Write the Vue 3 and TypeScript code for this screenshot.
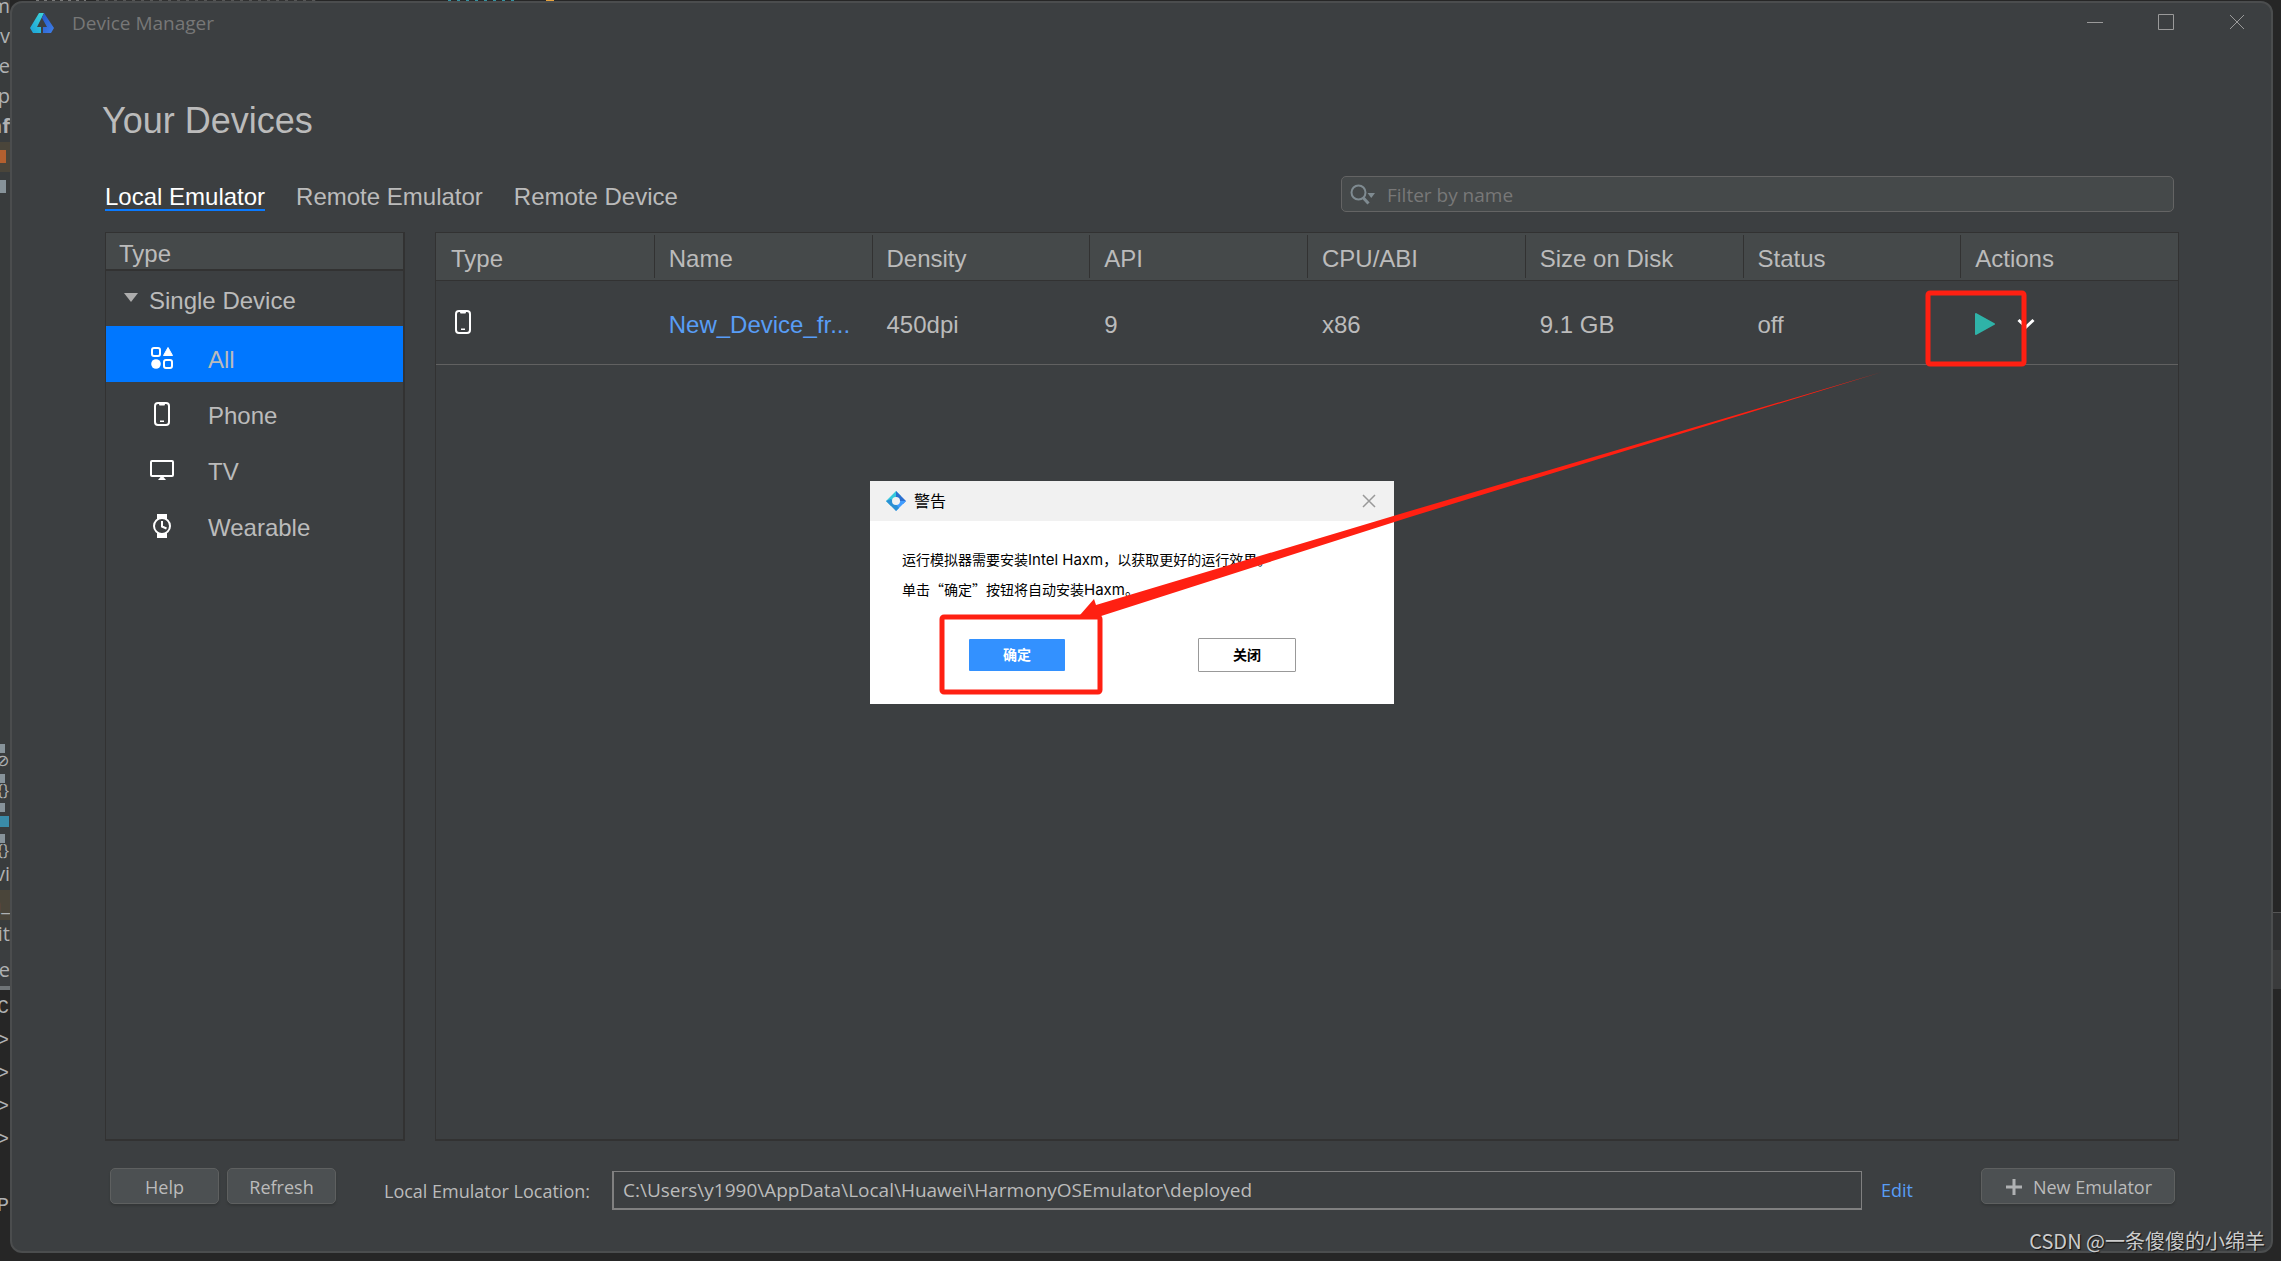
<script setup lang="ts">
import { ref } from 'vue'

type IconName = 'all' | 'phone' | 'tv' | 'watch'

const tabs = ['Local Emulator', 'Remote Emulator', 'Remote Device']
const activeTab = ref('Local Emulator')

const types: { icon: IconName; label: string }[] = [
  { icon: 'all', label: 'All' },
  { icon: 'phone', label: 'Phone' },
  { icon: 'tv', label: 'TV' },
  { icon: 'watch', label: 'Wearable' },
]
const activeType = ref('All')

const columns = ['Type', 'Name', 'Density', 'API', 'CPU/ABI', 'Size on Disk', 'Status', 'Actions']
const device = { name: 'New_Device_fr...', density: '450dpi', api: '9', cpu: 'x86', size: '9.1 GB', status: 'off' }

const filter = ref('')
const location = ref('C:\\Users\\y1990\\AppData\\Local\\Huawei\\HarmonyOSEmulator\\deployed')

const treeTop = [
  { text: 'gm', kind: '' },
  { text: 'av', kind: '' },
  { text: 'de', kind: '' },
  { text: 'p', kind: '' },
  { text: 'nf', kind: 'bold' },
  { text: '', kind: 'orange' },
  { text: '', kind: 'grey' },
]
const treeBottom = [
  { text: '⊘', kind: 'file' },
  { text: '{}', kind: 'file' },
  { text: '', kind: 'cyan' },
  { text: '{}', kind: 'file' },
  { text: 'vi', kind: '' },
  { text: 'h_', kind: 'marked' },
  { text: 'git', kind: '' },
]
const consoleLines = ['C', '>', '>', '>', '>', '', 'P']
</script>

<template>
  <div class="desktop">
    <div class="editor-top" aria-hidden="true"><i class="t1"></i><i class="t2"></i><i class="t3"></i><i class="t4"></i></div>
    <div class="ide-left" aria-hidden="true">
      <div class="tree">
        <div v-for="(r, i) in treeTop" :key="i" class="tree-row" :class="r.kind">{{ r.text }}</div>
      </div>
      <div class="tree tree-lower">
        <div v-for="(r, i) in treeBottom" :key="i" class="tree-row" :class="r.kind">{{ r.text }}</div>
      </div>
      <div class="tool-tab">ne</div>
      <div class="console">
        <div v-for="(l, i) in consoleLines" :key="i" class="console-row">{{ l }}</div>
      </div>
    </div>

    <div class="window">
      <header class="titlebar">
        <svg class="logo" viewBox="0 0 24 22" width="24" height="22">
          <defs>
            <linearGradient id="lg-a" x1="0" y1="1" x2="1" y2="0">
              <stop offset="0" stop-color="#1aa0d8" />
              <stop offset="1" stop-color="#3fd6d8" />
            </linearGradient>
            <linearGradient id="lg-b" x1="0" y1="0" x2="1" y2="1">
              <stop offset="0" stop-color="#2458c8" />
              <stop offset="1" stop-color="#3f7fe8" />
            </linearGradient>
          </defs>
          <path d="M9 1h5L7 15h4v6H3L0 16z" fill="url(#lg-a)" />
          <path d="M14 1l10 15-3 5h-8v-6h4L12 6z" fill="url(#lg-b)" />
        </svg>
        <span class="title">Device Manager</span>
        <div class="window-buttons">
          <button type="button" aria-label="Minimize">
            <svg width="16" height="16" viewBox="0 0 16 16"><path d="M0 8.500h16" /></svg>
          </button>
          <button type="button" aria-label="Maximize">
            <svg width="16" height="16" viewBox="0 0 16 16"><path d="M.5 .5h15v15H.5z" /></svg>
          </button>
          <button type="button" aria-label="Close">
            <svg width="16" height="16" viewBox="0 0 16 16"><path d="M1 1l14 14M15 1L1 15" /></svg>
          </button>
        </div>
      </header>

      <main class="content">
        <h1>Your Devices</h1>

        <div class="toolbar">
          <nav class="tabs" role="tablist">
            <button
              v-for="t in tabs"
              :key="t"
              type="button"
              role="tab"
              :aria-selected="t === activeTab"
              :class="{ active: t === activeTab }"
              @click="activeTab = t"
            >{{ t }}</button>
          </nav>
          <label class="search">
            <svg width="26" height="22" viewBox="0 0 26 22">
              <circle cx="8.5" cy="8.5" r="7" fill="none" stroke="#7f8b91" stroke-width="2" />
              <path d="M13 13.500l5.500 6" stroke="#7f8b91" stroke-width="3" />
              <path d="M17.500 9h7.500l-3.750 5z" fill="#7f8b91" />
            </svg>
            <input v-model="filter" type="text" placeholder="Filter by name" aria-label="Filter by name" />
          </label>
        </div>

        <div class="panels">
          <aside class="sidebar">
            <div class="side-head">Type</div>
            <div class="group">
              <svg width="14" height="10" viewBox="0 0 14 10"><path d="M0 0h14L7 9z" fill="#adadad" /></svg>
              Single Device
            </div>
            <button
              v-for="t in types"
              :key="t.label"
              type="button"
              class="type"
              :class="{ active: t.label === activeType }"
              @click="activeType = t.label"
            >
              <svg v-if="t.icon === 'all'" width="24" height="24" viewBox="0 0 24 24">
                <rect x="2" y="2" width="8" height="8" rx="2" fill="none" stroke="#fff" stroke-width="2" />
                <rect x="14" y="14" width="8" height="8" rx="2" fill="none" stroke="#fff" stroke-width="2" />
                <path d="M18 1.500L22.500 9.500h-9z" fill="#fff" stroke="#fff" stroke-linejoin="round" />
                <circle cx="6" cy="18" r="4.800" fill="#fff" />
              </svg>
              <svg v-else-if="t.icon === 'phone'" width="24" height="24" viewBox="0 0 24 24">
                <rect x="5" y="1" width="14" height="22" rx="3" fill="none" stroke="#fff" stroke-width="2" />
                <path d="M8.500 1h7l-1 2.500h-5zM10 18.500h4v1.500h-4z" fill="#fff" />
              </svg>
              <svg v-else-if="t.icon === 'tv'" width="24" height="24" viewBox="0 0 24 24">
                <rect x="1" y="3" width="22" height="15" rx="1" fill="none" stroke="#fff" stroke-width="2" />
                <path d="M10.500 19h3l2.500 3H8z" fill="#fff" />
              </svg>
              <svg v-else width="24" height="24" viewBox="0 0 24 24">
                <path d="M7 0h10v5H7zM7 19h10v5H7z" fill="#fff" />
                <circle cx="12" cy="12" r="8" fill="#3c3f41" stroke="#fff" stroke-width="2" />
                <path d="M12 7v5.500l4.500 2" fill="none" stroke="#fff" stroke-width="2" />
              </svg>
              <span>{{ t.label }}</span>
            </button>
          </aside>

          <section class="devices">
            <table>
              <thead>
                <tr><th v-for="c in columns" :key="c" scope="col">{{ c }}</th></tr>
              </thead>
              <tbody>
                <tr>
                  <td>
                    <svg class="row-phone" width="24" height="24" viewBox="0 0 24 24">
                      <rect x="5" y="1" width="14" height="22" rx="3" fill="none" stroke="#fff" stroke-width="2" />
                      <path d="M8.500 1h7l-1 2.500h-5zM10 18.500h4v1.500h-4z" fill="#fff" />
                    </svg>
                  </td>
                  <td><a href="#">{{ device.name }}</a></td>
                  <td>{{ device.density }}</td>
                  <td>{{ device.api }}</td>
                  <td>{{ device.cpu }}</td>
                  <td>{{ device.size }}</td>
                  <td>{{ device.status }}</td>
                  <td>
                    <div class="actions">
                      <button type="button" aria-label="Run">
                        <svg width="20" height="22" viewBox="0 0 20 22"><path d="M1 1l18 10L1 21z" fill="#2fb3a8" stroke="#2fb3a8" stroke-width="2" stroke-linejoin="round" /></svg>
                      </button>
                      <button type="button" aria-label="More">
                        <svg width="18" height="12" viewBox="0 0 18 12"><path d="M1.500 2L9 9l7.500-7" fill="none" stroke="#fff" stroke-width="3" /></svg>
                      </button>
                    </div>
                  </td>
                </tr>
              </tbody>
            </table>
          </section>
        </div>

        <footer class="footer">
          <button type="button" class="btn">Help</button>
          <button type="button" class="btn">Refresh</button>
          <label for="location">Local Emulator Location:</label>
          <input id="location" v-model="location" type="text" readonly />
          <a href="#" class="edit">Edit</a>
          <button type="button" class="btn new">
            <svg width="16" height="16" viewBox="0 0 16 16"><path d="M8 0v16M0 8h16" stroke="#afb1b3" stroke-width="3" /></svg>
            New Emulator
          </button>
        </footer>
      </main>
    </div>

    <div class="ide-right" aria-hidden="true"></div>

    <div class="dialog" role="dialog" aria-labelledby="dialog-title" lang="zh-CN">
      <div class="dialog-head">
        <svg width="20" height="20" viewBox="0 0 20 20">
          <path d="M10 0L0 10l5 5 5-9 5-1z" fill="#35c8dc" />
          <path d="M10 0l10 10-3 3-7-7z" fill="#2a6fd0" />
          <path d="M20 10L10 20l-2-6 7-4z" fill="#3f9cff" />
          <path d="M0 10l10 10 3-3-8-9z" fill="#2a8fd4" />
          <circle cx="10" cy="10" r="4" fill="#f1f1f1" />
        </svg>
        <span id="dialog-title">警告</span>
        <button type="button" aria-label="关闭对话框">
          <svg width="14" height="14" viewBox="0 0 14 14"><path d="M1 1l12 12M13 1L1 13" stroke="#999" stroke-width="1.500" /></svg>
        </button>
      </div>
      <div class="dialog-body">
        <p>运行模拟器需要安装<span class="latin">Intel Haxm</span>，以获取更好的运行效果。</p>
        <p>单击“确定”按钮将自动安装<span class="latin">Haxm</span>。</p>
      </div>
      <div class="dialog-actions">
        <button type="button" class="ok">确定</button>
        <button type="button" class="cancel">关闭</button>
      </div>
    </div>

    <svg class="annotations" width="2281" height="1261" viewBox="0 0 2281 1261" aria-hidden="true">
      <g fill="none" stroke="#ff2012" stroke-width="5">
        <rect x="1928" y="293" width="96" height="71" rx="2" />
        <rect x="942" y="617" width="158" height="75" rx="2" />
      </g>
      <path d="M1882 372L1410 511L1096 605L1094 599L1080 615L1098 617L1410 517Z" fill="#ff2012" />
    </svg>

    <div class="watermark" lang="zh-CN">CSDN @一条傻傻的小绵羊</div>
  </div>
</template>

<style>
body {
  background: #262626;
}
</style>

<style scoped>
.desktop {
  --ui: "Open Sans", "Noto Sans", sans-serif;
  position: relative;
  display: grid;
  grid-template-columns: 10px minmax(0, 1fr) 8px;
  min-height: 100vh;
  overflow: hidden;
  color: #bbb;
  font: 24px/28px "Liberation Sans", Arial, sans-serif;
}
button {
  margin: 0;
  padding: 0;
  border: 0;
  background: none;
  color: inherit;
  font: inherit;
}
svg {
  display: block;
  flex: none;
}
a {
  color: #589df6;
  text-decoration: none;
}

/* Slivers of the application behind the window */
.editor-top {
  position: absolute;
  top: 0;
  left: 0;
  display: flex;
  gap: 10px;
  padding-left: 36px;
}
.editor-top i { height: 2px; }
.t1 { width: 50px; background: repeating-linear-gradient(90deg, #777 0 3px, #303030 3px 8px); }
.t2 { width: 220px; background: repeating-linear-gradient(90deg, #555 0 3px, #303030 3px 9px); }
.t3 { width: 68px; margin-left: 122px; background: repeating-linear-gradient(90deg, #3592a0 0 3px, #262626 3px 9px); }
.t4 { width: 8px; margin-left: 20px; background: #e8a33d; }
.ide-left {
  width: 10px;
  height: 0;
  min-height: 100%;
  overflow: hidden;
  background: #262626;
  font: 20px/28px "Open Sans", "Noto Sans", sans-serif;
  color: #afb1b3;
}
.tree {
  height: 753px;
  margin-top: -8px;
  background: #393c3d;
}
.tree-lower {
  height: 210px;
  margin-top: -5px;
}
.tree-row {
  display: flex;
  justify-content: flex-end;
  height: 30px;
}
.bold { font-weight: 700; }
.orange::before, .grey::before {
  content: "";
  width: 6px;
  height: 13px;
  margin: 8px 4px 0 0;
  background: #b4602f;
}
.orange { background: #4a453a; }
.grey::before { background: #87939a; }
.file {
  padding-right: 1px;
  background: linear-gradient(#87939a, #87939a) 0 4px / 5px 9px no-repeat;
  font-size: 16px;
  line-height: 40px;
}
.cyan { background: linear-gradient(#87939a, #87939a) 0 3px / 5px 9px no-repeat, linear-gradient(#3a8ba8, #3a8ba8) 0 16px / 9px 11px no-repeat; }
.marked { background: #4a453a; }
.tool-tab {
  display: flex;
  justify-content: flex-end;
  height: 36px;
  border-bottom: 4px solid #6f7477;
  background: #3b3e40;
  line-height: 40px;
}
.console-row {
  display: flex;
  justify-content: flex-end;
  height: 33px;
  padding-right: 1px;
  font: 20px/36px "Liberation Mono", monospace;
}
.ide-right {
  height: 120px;
  margin-top: 912px;
  background: linear-gradient(#555 1px, #2f3031 1px 38px, #3a3b3c 38px 77px, #262626 77px);
}

.window {
  position: relative;
  display: flex;
  flex-direction: column;
  margin: 1px 0 8px;
  border: 2px solid #4b4d4e;
  border-radius: 12px;
  background: #3c3f41;
}
.titlebar {
  display: flex;
  align-items: center;
  height: 40px;
  padding: 0 26px 0 18px;
  color: #777;
  font: 19px/24px var(--ui);
}
.title { margin-left: 18px; }
.window-buttons {
  display: flex;
  gap: 55px;
  margin-left: auto;
  padding-bottom: 2px;
}
.window-buttons path {
  fill: none;
  stroke: #9a9a9a;
}

.content {
  display: flex;
  flex: 1;
  flex-direction: column;
  padding: 58px 92px 41px 93px;
}
h1 {
  margin: 0 0 35px -3px;
  font-size: 36px;
  font-weight: 400;
  line-height: 40px;
}
.toolbar {
  display: flex;
  align-items: flex-end;
  justify-content: space-between;
  padding-right: 5px;
}
.tabs {
  display: flex;
  gap: 31px;
  padding-bottom: 1px;
}
.tabs button {
  border-bottom: 2px solid transparent;
  line-height: 24px;
}
.tabs .active {
  border-color: #0a7aff;
  color: #fff;
}
.search {
  display: flex;
  align-items: center;
  gap: 11px;
  box-sizing: border-box;
  width: 833px;
  height: 36px;
  padding: 2px 8px 0;
  border: 1px solid #646464;
  border-radius: 5px;
  background: #45494a;
}
.search input {
  flex: 1;
  padding: 0;
  border: 0;
  outline: 0;
  background: none;
  color: #bbb;
  font: 19px/24px var(--ui);
}
.search input::placeholder { color: #787878; opacity: 1; }

.panels {
  display: flex;
  flex: 1;
  gap: 30px;
  margin-top: 20px;
}
.sidebar {
  box-sizing: border-box;
  flex: 0 0 300px;
  border: 1px solid #323232;
  border-width: 1px 2px 2px 1px;
}
.side-head {
  height: 36px;
  padding-left: 13px;
  border-bottom: 2px solid #323232;
  background: #45494a;
  line-height: 42px;
}
.group {
  display: flex;
  gap: 11px;
  height: 55px;
  padding-left: 18px;
  line-height: 60px;
}
.group svg { margin-top: 22px; }
.type {
  display: flex;
  align-items: center;
  gap: 34px;
  box-sizing: border-box;
  width: 100%;
  height: 56px;
  padding: 8px 0 0 44px;
}
.type span { padding-top: 4px; }
.type.active { background: #0077ff; }

.devices {
  flex: 1;
  min-width: 0;
  border: 1px solid #323232;
  border-bottom-width: 2px;
}
table {
  width: 100%;
  border-collapse: collapse;
  table-layout: fixed;
}
th, td {
  padding: 0 0 0 15px;
  font-weight: 400;
  text-align: left;
  white-space: nowrap;
}
th {
  height: 43px;
  padding-top: 4px;
  border-bottom: 1px solid #323232;
  background: linear-gradient(#323232, #323232) 0 2px / 1px 43px no-repeat, #45494a;
}
th:first-child { background: #45494a; }
td {
  height: 79px;
  padding-top: 4px;
  border-bottom: 1px solid #616161;
}
.row-phone { margin-bottom: 6px; }
.actions {
  display: flex;
  align-items: center;
  gap: 22px;
  padding-bottom: 2px;
}

.footer {
  display: flex;
  align-items: flex-start;
  margin-top: 27px;
  padding: 0 4px 0 5px;
  font: 18px/24px var(--ui);
}
.btn {
  box-sizing: border-box;
  width: 109px;
  height: 36px;
  margin-right: 8px;
  padding-top: 2px;
  border: 1px solid #5e6060;
  border-radius: 5px;
  background: #4c5052;
  box-shadow: 0 2px 2px #343738;
}
.footer label { margin: 11px 22px 0 40px; }
.footer input {
  box-sizing: border-box;
  flex: 1;
  min-width: 0;
  height: 39px;
  margin-top: 3px;
  padding: 0 9px;
  border: 1px solid #808080;
  border-width: 1px 1px 2px 2px;
  outline: 0;
  background: none;
  color: #bbb;
  font: 19px/24px var(--ui);
}
.edit { margin: 10px 68px 0 19px; }
.new {
  display: flex;
  align-items: center;
  justify-content: center;
  gap: 11px;
  width: 194px;
  margin-right: 0;
  padding-left: 2px;
}

.dialog {
  position: absolute;
  top: 481px;
  left: 870px;
  width: 524px;
  height: 223px;
  background: #fff;
  color: #000;
  font: 14px/30px "Noto Sans CJK SC", sans-serif;
}
.dialog-head {
  display: flex;
  align-items: center;
  gap: 8px;
  height: 40px;
  padding: 0 18px 0 16px;
  background: #f1f1f1;
  font-size: 16px;
}
.dialog-head span { padding-bottom: 3px; }
.dialog-head button { margin-left: auto; }
.dialog-body { padding: 23px 32px 0; }
.dialog-body p {
  height: 30px;
  margin: 0;
}
.latin { font: 15px/20px Inter, sans-serif; }
.dialog-actions {
  display: flex;
  align-items: center;
  justify-content: space-between;
  padding: 34px 98px 0 99px;
  font-weight: 700;
}
.dialog-actions button {
  padding-bottom: 2px;
  line-height: 20px;
}
.ok {
  box-sizing: border-box;
  width: 96px;
  height: 32px;
  border-radius: 1px;
  background: #3391ff;
  color: #fff;
}
.cancel {
  box-sizing: border-box;
  width: 98px;
  height: 34px;
  border: 1px solid #999;
  border-radius: 1px;
}
.annotations {
  position: absolute;
  top: 0;
  left: 0;
  pointer-events: none;
}
.watermark {
  position: absolute;
  right: 16px;
  bottom: 5px;
  color: #ccc;
  font: 20px/30px "Noto Sans CJK SC", sans-serif;
  text-shadow: 1px 1px 1px #111;
}
</style>
